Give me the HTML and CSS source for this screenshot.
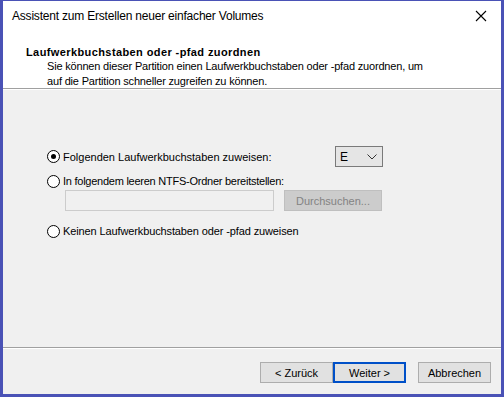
FILE: index.html
```html
<!DOCTYPE html>
<html lang="de">
<head>
    <meta charset="UTF-8">
    <title>Assistent zum Erstellen neuer einfacher Volumes</title>
    <link rel="stylesheet" href="styles.css">
</head>
<body>
    <div class="window">
        <div class="titlebar">
            <span class="title">Assistent zum Erstellen neuer einfacher Volumes</span>
            <span class="close">
                <svg width="12" height="12" viewBox="0 0 12 12">
                    <path d="M1 1 L11 11 M11 1 L1 11" stroke="#000" stroke-width="1.1" fill="none"/>
                </svg>
            </span>
        </div>

        <div class="header">
            <div class="heading">Laufwerkbuchstaben oder -pfad zuordnen</div>
            <div class="desc">Sie können dieser Partition einen Laufwerkbuchstaben oder -pfad zuordnen, um<br>auf die Partition schneller zugreifen zu können.</div>
        </div>

        <div class="content">
            <div class="row">
                <label class="option">
                    <span class="radio checked"></span>
                    Folgenden Laufwerkbuchstaben zuweisen:
                </label>
                <div class="select">
                    <span>E</span>
                    <svg width="10" height="6" viewBox="0 0 10 6">
                        <path d="M0.5 0.5 L5 5 L9.5 0.5" stroke="#333" stroke-width="1" fill="none"/>
                    </svg>
                </div>
            </div>

            <label class="option option-2">
                <span class="radio"></span>
                In folgendem leeren NTFS-Ordner bereitstellen:
            </label>
            <div class="folder-row">
                <div class="textbox"></div>
                <div class="btn disabled">Durchsuchen...</div>
            </div>

            <label class="option option-3">
                <span class="radio"></span>
                Keinen Laufwerkbuchstaben oder -pfad zuweisen
            </label>
        </div>

        <div class="footer">
            <div class="btn">&lt; Zurück</div>
            <div class="btn default">Weiter &gt;</div>
            <div class="btn cancel">Abbrechen</div>
        </div>
    </div>
</body>
</html>
```

FILE: styles.css
```css
body {
    margin: 0;
    padding: 0;
    font-family: "Liberation Sans", Arial, sans-serif;
    font-size: 11px;
    color: #000;
}
.window {
    width: 504px;
    height: 397px;
    box-sizing: border-box;
    border-style: solid;
    border-color: #4a52b6;
    border-width: 1px 3px 3px 3px;
    background-color: #f0f0f0;
    display: flex;
    flex-direction: column;
}
.titlebar {
    height: 31px;
    background-color: #fff;
    display: flex;
    align-items: center;
    justify-content: space-between;
    padding: 0 14px 0 9px;
    flex-shrink: 0;
}
.title {
    font-size: 12px;
    letter-spacing: -0.2px;
    padding-bottom: 1px;
}
.close {
    display: flex;
    padding-bottom: 2px;
}
.header {
    background-color: #fff;
    height: 57px;
    padding: 13px 0 0 23px;
    box-sizing: border-box;
    border-bottom: 1px solid #a0a0a0;
    box-shadow: 0 1px 0 #fff;
    flex-shrink: 0;
}
.heading {
    font-weight: bold;
    letter-spacing: 0.4px;
    line-height: 14px;
}
.desc {
    padding-left: 21px;
    line-height: 15px;
    letter-spacing: -0.18px;
    margin-top: 0;
}
.content {
    flex: 1;
    padding: 57px 0 0 44px;
    position: relative;
}
.row {
    display: flex;
    align-items: center;
    width: 336px;
    justify-content: space-between;
}
.option {
    display: flex;
    align-items: center;
    height: 16px;
}
.option-2 {
    margin-top: 6px;
    letter-spacing: -0.25px;
}
.option-3 {
    margin-top: 12px;
    letter-spacing: -0.12px;
}
.radio {
    width: 11px;
    height: 11px;
    border: 1px solid #000;
    border-radius: 50%;
    background-color: #fff;
    margin-right: 3px;
    position: relative;
    box-sizing: content-box;
}
.radio.checked::after {
    content: "";
    position: absolute;
    left: 3px;
    top: 3px;
    width: 5px;
    height: 5px;
    border-radius: 50%;
    background-color: #000;
}
.select {
    width: 37px;
    height: 19px;
    border: 1px solid #7a7a7a;
    background-color: #e5e5e5;
    display: flex;
    align-items: center;
    justify-content: space-between;
    padding: 0 5px 0 4px;
    box-sizing: content-box;
    font-size: 12px;
}
.select svg {
    margin-top: 1px;
}
.folder-row {
    display: flex;
    margin: 1px 0 0 18px;
    gap: 10px;
}
.textbox {
    width: 207px;
    height: 19px;
    border: 1px solid #cccccc;
    background-color: #f0f0f0;
}
.btn {
    width: 71px;
    height: 19px;
    border: 1px solid #adadad;
    background-color: #e1e1e1;
    display: flex;
    align-items: center;
    justify-content: center;
    box-sizing: content-box;
}
.btn.disabled {
    width: 96px;
    border-color: #bfbfbf;
    background-color: #cccccc;
    color: #838383;
}
.footer {
    height: 47px;
    flex-shrink: 0;
    border-top: 1px solid #a0a0a0;
    box-shadow: inset 0 1px 0 #fff;
    display: flex;
    justify-content: flex-end;
    align-items: flex-start;
    padding: 14px 10px 0 0;
    box-sizing: border-box;
}
.btn.default {
    width: 69px;
    height: 17px;
    border: 2px solid #0050c8;
    margin-left: 0;
}
.btn.cancel {
    margin-left: 12px;
}
```
